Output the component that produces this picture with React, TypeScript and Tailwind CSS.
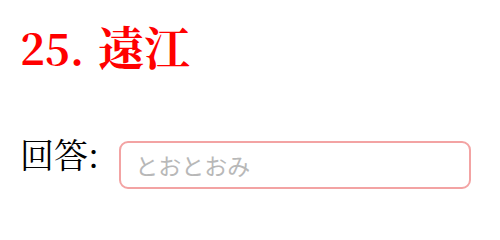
const serif = "font-['Noto_Serif_CJK_JP','Liberation_Serif',serif]"

export default function App() {
  return (
    <div className="w-[500px] h-[205px] bg-white px-5 pt-[17px]">
      <h1 className={`${serif} text-[42px] leading-[56px] font-bold text-[#ff0000]`}>
        25.<span className="ml-[14px] text-[46px]">遠江</span>
      </h1>
      <div className="mt-[66px] flex items-start gap-[20px]">
        <span className={`${serif} -mt-[4px] text-[34px] leading-[34px] text-black`}>回答:</span>
        <input
          type="text"
          placeholder="とおとおみ"
          className="w-[352px] h-[48px] rounded-[9px] border-2 border-[#f3a3a3] px-[14px] text-[23px] font-['Noto_Sans_CJK_JP',sans-serif] outline-none placeholder:text-[#b8b8b8]"
        />
      </div>
    </div>
  )
}
